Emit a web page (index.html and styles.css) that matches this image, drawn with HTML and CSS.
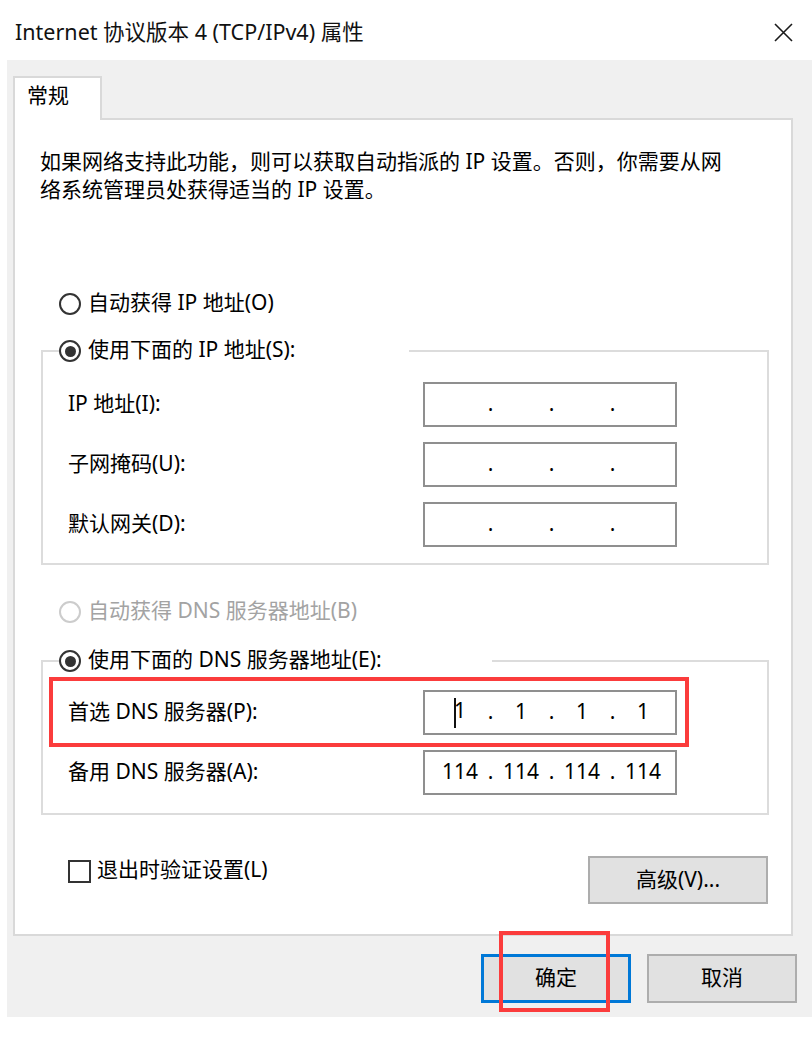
FILE: index.html
```html
<!DOCTYPE html>
<html lang="zh-CN">
<head>
<meta charset="utf-8">
<title>Internet 协议版本 4 (TCP/IPv4) 属性</title>
<link rel="stylesheet" href="styles.css">
</head>
<body>
<div class="dialog">
  <header class="titlebar">
    <span class="title">Internet 协议版本 4 (TCP/IPv4) 属性</span>
    <svg class="close" viewBox="0 0 19 19" width="19" height="19" aria-label="关闭">
      <path d="M1 1 L18 18 M18 1 L1 18" stroke="#1a1a1a" stroke-width="1.6" fill="none"/>
    </svg>
  </header>

  <div class="body">
    <div class="tabs"><div class="tab">常规</div></div>

    <div class="panel">
      <p class="desc">如果网络支持此功能，则可以获取自动指派的 IP 设置。否则，你需要从网<br>络系统管理员处获得适当的 IP 设置。</p>

      <label class="option option-first"><span class="radio"></span><span>自动获得 IP 地址(O)</span></label>

      <fieldset class="group group-ip">
        <legend class="group-legend legend-ip"><span class="radio checked"></span><span>使用下面的 IP 地址(S):</span></legend>
        <div class="group-body body-ip">
          <span class="field-label">IP 地址(I):</span>
          <div class="ip-input"><span class="seg"></span><span class="dot">.</span><span class="seg"></span><span class="dot">.</span><span class="seg"></span><span class="dot">.</span><span class="seg"></span></div>
          <span class="field-label">子网掩码(U):</span>
          <div class="ip-input"><span class="seg"></span><span class="dot">.</span><span class="seg"></span><span class="dot">.</span><span class="seg"></span><span class="dot">.</span><span class="seg"></span></div>
          <span class="field-label">默认网关(D):</span>
          <div class="ip-input"><span class="seg"></span><span class="dot">.</span><span class="seg"></span><span class="dot">.</span><span class="seg"></span><span class="dot">.</span><span class="seg"></span></div>
        </div>
      </fieldset>

      <label class="option option-disabled"><span class="radio"></span><span>自动获得 DNS 服务器地址(B)</span></label>

      <fieldset class="group group-dns">
        <legend class="group-legend legend-dns"><span class="radio checked"></span><span>使用下面的 DNS 服务器地址(E):</span></legend>
        <div class="group-body body-dns">
          <div class="dns-row">
            <span class="field-label">首选 DNS 服务器(P):</span>
            <div class="ip-input"><span class="seg"><span class="caret"></span>1</span><span class="dot">.</span><span class="seg">1</span><span class="dot">.</span><span class="seg">1</span><span class="dot">.</span><span class="seg">1</span></div>
            <span class="mark mark-dns"></span>
          </div>
          <div class="dns-row">
            <span class="field-label">备用 DNS 服务器(A):</span>
            <div class="ip-input"><span class="seg">114</span><span class="dot">.</span><span class="seg">114</span><span class="dot">.</span><span class="seg">114</span><span class="dot">.</span><span class="seg">114</span></div>
          </div>
        </div>
      </fieldset>

      <div class="panel-footer">
        <label class="check"><span class="checkbox"></span><span>退出时验证设置(L)</span></label>
        <button class="btn btn-advanced" type="button">高级(V)...</button>
      </div>
    </div>

    <div class="actions">
      <button class="btn btn-action btn-primary" type="button">确定<span class="mark mark-ok"></span></button>
      <button class="btn btn-action" type="button">取消</button>
    </div>
  </div>
</div>
</body>
</html>
```

FILE: styles.css
```css
* { box-sizing: border-box; }

html, body {
  margin: 0;
  padding: 0;
  background: #ffffff;
}

body {
  font-family: "Noto Sans", "Noto Sans CJK SC", sans-serif;
  font-size: 21px;
  color: #000;
}

.dialog {
  width: 812px;
  height: 1043px;
}

/* title bar */
.titlebar {
  height: 60px;
  display: flex;
  align-items: center;
  justify-content: space-between;
  padding: 4px 19px 0 15px;
}

.title {
  font-size: 21.5px;
  line-height: 28px;
  color: #111;
}

.close {
  display: block;
  margin-top: 1px;
}

/* gray client area */
.body {
  margin-left: 7px;
  background: #f0f0f0;
  padding: 16px 15px 14px 6px;
}

.tabs {
  display: flex;
}

.tab {
  position: relative;
  z-index: 1;
  width: 89px;
  height: 44px;
  margin-bottom: -2px;
  background: #ffffff;
  border: 2px solid #d9d9d9;
  border-bottom: none;
  padding: 2px 0 0 12px;
  line-height: 30px;
}

.panel {
  margin-right: 4px;
  height: 818px;
  background: #ffffff;
  border: 2px solid #d9d9d9;
  display: flex;
  flex-direction: column;
  align-items: flex-start;
}

.desc {
  margin: 27px 0 0 25px;
  line-height: 28px;
  white-space: nowrap;
}

/* radios */
.option {
  display: flex;
  align-items: center;
  gap: 7px;
  height: 30px;
  line-height: 30px;
  margin-left: 44px;
}

.option > span:last-child,
.group-legend > span:last-child,
.check > span:last-child,
.field-label {
  position: relative;
  top: -2px;
}

.option-first { margin-top: 86px; }

.option-disabled {
  margin-top: 32px;
  color: #a3a3a3;
}

.radio {
  width: 22px;
  height: 22px;
  flex: none;
  border: 2px solid #333333;
  border-radius: 50%;
  background: #ffffff;
  display: flex;
  align-items: center;
  justify-content: center;
}

.radio.checked::after {
  content: "";
  width: 11px;
  height: 11px;
  border-radius: 50%;
  background: #333333;
}

.option-disabled .radio {
  border-color: #cccccc;
}

/* group boxes */
.group {
  margin: 0 0 0 26px;
  padding: 0;
  width: 728px;
  border: 2px solid #dcdcdc;
  min-inline-size: 0;
}

.group-ip { margin-top: 17px; }
.group-dns { margin-top: 19px; }

.group-legend {
  padding: 0;
  margin-left: 16px;
  height: 30px;
  display: flex;
  align-items: center;
  gap: 7px;
  line-height: 30px;
  white-space: nowrap;
}

.legend-ip { width: 350px; }
.legend-dns { width: 433px; }

.group-body {
  padding-left: 25px;
}

.body-ip {
  display: grid;
  grid-template-columns: 355px 254px;
  row-gap: 15px;
  align-items: center;
  padding-top: 16px;
  padding-bottom: 16px;
}

.body-dns {
  display: flex;
  flex-direction: column;
  gap: 15px;
  padding-top: 14px;
  padding-bottom: 18px;
}

.dns-row {
  position: relative;
  display: grid;
  grid-template-columns: 355px 254px;
  align-items: center;
}

.field-label {
  line-height: 30px;
  white-space: nowrap;
}

.ip-input {
  height: 45px;
  width: 254px;
  border: 2px solid #8f8f8f;
  background: #ffffff;
  display: flex;
  align-items: center;
  padding: 0 0 3px 10px;
}

.seg {
  width: 50px;
  text-align: center;
  line-height: 30px;
  white-space: nowrap;
}

.dot {
  width: 11px;
  text-align: center;
  line-height: 30px;
}

.caret {
  display: inline-block;
  width: 2px;
  height: 30px;
  background: #111;
  vertical-align: middle;
  margin-right: -2px;
  position: relative;
  top: 1px;
}

/* annotation marks */
.mark {
  position: absolute;
  border: 4px solid #fb3c3c;
  pointer-events: none;
}

.mark-dns {
  left: -19px;
  top: -13px;
  width: 640px;
  height: 70px;
}

.mark-ok {
  left: 15px;
  top: -26px;
  width: 111px;
  height: 81px;
}

/* panel footer */
.panel-footer {
  margin: 41px 0 0 26px;
  width: 727px;
  padding-left: 27px;
  display: flex;
  justify-content: space-between;
  align-items: flex-start;
}

.check {
  display: flex;
  align-items: center;
  gap: 6px;
  height: 30px;
  line-height: 30px;
}

.checkbox {
  width: 23px;
  height: 23px;
  border: 2px solid #333333;
  background: #ffffff;
}

/* buttons */
.btn {
  font: inherit;
  color: #000;
  background: #e1e1e1;
  border: 2px solid #adadad;
  padding: 0 0 3px;
  margin: 0;
  line-height: 30px;
}

.btn-advanced {
  width: 180px;
  height: 48px;
}

.actions {
  margin-top: 18px;
  display: flex;
  justify-content: flex-end;
  gap: 16px;
}

.btn-action {
  width: 150px;
  height: 49px;
}

.btn-primary {
  position: relative;
  border: 3px solid #0078d7;
}
```
